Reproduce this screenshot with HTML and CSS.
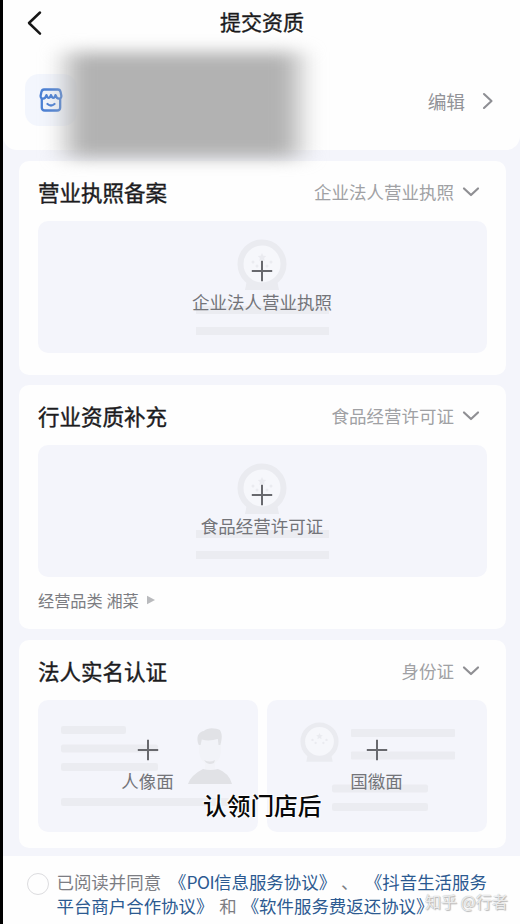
FILE: index.html
```html
<!DOCTYPE html>
<html lang="zh-CN">
<head>
<meta charset="utf-8">
<title>提交资质</title>
<link rel="stylesheet" href="styles.css">
</head>
<body>
<svg class="defs" width="0" height="0">
  <symbol id="down" viewBox="0 0 18 12"><path d="M2 2.500 9 9l7-6.500" fill="none" stroke="#8f8f93" stroke-width="2.200" stroke-linecap="round" stroke-linejoin="round"/></symbol>
  <symbol id="plus" viewBox="0 0 22 22"><path d="M11 .8v20.400M.8 11h20.400" stroke="#68696e" stroke-width="2" fill="none"/></symbol>
  <symbol id="emblem" viewBox="0 0 50 54">
    <path d="M10 41h30l2 10H8z" fill="#eaebf0"/>
    <circle cx="25" cy="25" r="21.500" fill="#f6f7fb" stroke="#eaebf0" stroke-width="6"/>
    <path d="m25 14 1.300 2.700 3 .4-2.200 2 .6 3-2.700-1.500-2.700 1.500.6-3-2.200-2 3-.4z" fill="#eaebf0"/>
    <g fill="#eaebf0"><circle cx="16" cy="23" r="1.500"/><circle cx="20" cy="27" r="1.500"/><circle cx="30" cy="27" r="1.500"/><circle cx="34" cy="23" r="1.500"/></g>
  </symbol>
</svg>
<div class="screen">
  <header class="top">
    <div class="nav">
      <svg class="back" width="18" height="28" viewBox="0 0 18 28"><path d="M14 3.500 3 14l11 10.700" fill="none" stroke="#161616" stroke-width="2.500" stroke-linecap="round" stroke-linejoin="round"/></svg>
      <h1>提交资质</h1>
    </div>
    <div class="store">
      <div class="avatar">
        <svg width="24" height="24" viewBox="0 0 24 24" fill="none" stroke="#4a7fd4" stroke-width="2.300" stroke-linejoin="round" stroke-linecap="round">
          <path d="M5 1.500h14q2 0 2.600 2.500l.8 4c0 3.500-4.400 4-5.900-.8-.9 3.500-3.400 3.500-4.500 0-1.100 3.500-3.600 3.500-4.500 0C6 12 1.600 11.500 1.600 8l.8-4Q3 1.500 5 1.500z"/>
          <path d="M2.800 11v8.500q0 3 3 3h12.400q3 0 3-3V11"/>
          <path d="M8.500 16q3.500 3 7 0"/>
        </svg>
      </div>
      <div class="edit"><span>编辑</span><svg width="12" height="18" viewBox="0 0 12 18"><path d="m2 2 7.500 7L2 16" fill="none" stroke="#8e8f94" stroke-width="2.100" stroke-linecap="round" stroke-linejoin="round"/></svg></div>
    </div>
    <svg class="mask" width="360" height="180" viewBox="0 0 360 180">
      <defs><filter id="soft" x="-30%" y="-40%" width="160%" height="180%" color-interpolation-filters="sRGB"><feGaussianBlur stdDeviation="13 8"/></filter></defs>
      <rect x="63" y="31" width="232" height="106" fill="#b2b2b2" filter="url(#soft)"/>
    </svg>
  </header>

  <main>
    <section class="card license">
      <div class="head"><h2>营业执照备案</h2><div class="select"><span>企业法人营业执照</span><svg width="18" height="12"><use href="#down"/></svg></div></div>
      <div class="panel">
        <div class="art doc"><svg width="50" height="54"><use href="#emblem"/></svg><i></i><i></i></div>
        <div class="upload"><svg width="22" height="22"><use href="#plus"/></svg><span>企业法人营业执照</span></div>
      </div>
    </section>

    <section class="card industry">
      <div class="head"><h2>行业资质补充</h2><div class="select"><span>食品经营许可证</span><svg width="18" height="12"><use href="#down"/></svg></div></div>
      <div class="panel">
        <div class="art doc"><svg width="50" height="54"><use href="#emblem"/></svg><i></i><i></i></div>
        <div class="upload"><svg width="22" height="22"><use href="#plus"/></svg><span>食品经营许可证</span></div>
      </div>
      <div class="category"><span>经营品类 湘菜</span><svg width="8" height="10" viewBox="0 0 8 10"><path d="M0 .7 8 5 0 9.300z" fill="#b9babd"/></svg></div>
    </section>

    <section class="card identity">
      <div class="head"><h2>法人实名认证</h2><div class="select"><span>身份证</span><svg width="18" height="12"><use href="#down"/></svg></div></div>
      <div class="pair">
        <div class="panel">
          <svg class="art" width="220" height="132" viewBox="0 0 220 132">
            <g fill="#ebecf1"><rect x="23" y="26" width="65" height="8" rx="2"/><rect x="23" y="44.500" width="97" height="8" rx="2"/><rect x="23" y="63" width="97" height="8" rx="2"/><rect x="23" y="98" width="170" height="8" rx="2"/></g>
            <path d="M161 40h22v12q-1 8-6 11v7h-10v-7q-5-3-6-11z" fill="#f2f3f8"/>
            <path d="M160.800 45c-3-7-1-13 5-14 4-4 12-3 16-1 3 4 2 10 .5 15h-1.800l-.7-6c-5 1.500-11 2-16 .5l-1.200 5.500zM166 60q6 3 11 0l-1 3q-5 2-8-.5zM150 84q3-9 15-15 7 2 15 0 11 4 14 15z" fill="#e1e2e6"/>
          </svg>
          <div class="upload"><svg width="22" height="22"><use href="#plus"/></svg><span>人像面</span></div>
        </div>
        <div class="panel">
          <svg class="art" width="220" height="132" viewBox="0 0 220 132">
            <use href="#emblem" x="33" y="22" width="39" height="42"/>
            <g fill="#ebecf1"><rect x="84" y="29" width="104" height="8" rx="1"/><rect x="84" y="51.500" width="104" height="8" rx="1"/><rect x="65" y="84.500" width="96" height="8" rx="2"/><rect x="65" y="103" width="96" height="8" rx="2"/></g>
          </svg>
          <div class="upload"><svg width="22" height="22"><use href="#plus"/></svg><span>国徽面</span></div>
        </div>
      </div>
    </section>
  </main>

  <footer>
    <div class="radio"></div>
    <p>已阅读并同意 <a class="first">《<span class="latin">POI</span>信息服务协议》</a> <span class="comma">、</span> <a class="next">《抖音生活服务</a><br><a>平台商户合作协议》</a> <span class="and">和</span> <a class="last">《软件服务费返还协议》</a></p>
  </footer>
  <div class="caption">认领门店后</div>
  <div class="watermark">知乎 @行者</div>
</div>
</body>
</html>
```
FILE: styles.css
```css
* { box-sizing: border-box; }
body { margin: 0; background: #000; font-family: "Noto Sans CJK SC", sans-serif; }
h1, h2, p { margin: 0; font-weight: 400; }
svg { display: block; flex: none; }
.defs { position: absolute; }

.screen {
  position: relative;
  width: 517px;
  height: 924px;
  margin-left: 3px;
  overflow: hidden;
  background: #f4f5fb;
  display: flex;
  flex-direction: column;
}

.top {
  position: relative;
  height: 150px;
  background: #fefefe;
  border-radius: 0 0 14px 14px;
}
.nav { height: 45px; display: grid; place-items: center; }
.nav > * { grid-area: 1 / 1; }
.back { justify-self: start; margin-left: 23px; }
h1 { font-size: 21px; line-height: 30px; color: #1a1a1c; margin: 0 0 3px 1px; -webkit-text-stroke: .35px #1a1a1c; }
.store {
  height: 54px;
  margin: 28px 26px 0 22px;
  display: flex;
  align-items: center;
  justify-content: space-between;
}
.avatar {
  width: 52px;
  height: 52px;
  border-radius: 14px;
  background: #f3f6fd;
  display: grid;
  place-items: center;
}
.edit { display: flex; align-items: center; gap: 17px; margin-top: 1px; color: #929398; font-size: 18.700px; line-height: 26px; }
.mask { position: absolute; left: 1px; top: 21px; z-index: 2; }

main { padding: 11px 14px 0 16px; display: grid; gap: 10.500px; }
.card { background: #fefefe; border-radius: 10px; padding: 0 19px; }
.license { height: 213.500px; }
.industry { height: 244px; }
.identity { height: 208.500px; }
.head { height: 60px; display: flex; align-items: center; justify-content: space-between; padding-top: 2px; }
h2 { font-size: 21.500px; line-height: 30px; color: #1c1c1e; -webkit-text-stroke: .4px #1c1c1e; }
.select { display: flex; align-items: center; gap: 8px; padding-right: 7px; color: #a0a1a4; font-size: 17.500px; line-height: 26px; }

.panel { position: relative; height: 132px; border-radius: 10px; background: #f4f5fb; }
.pair { display: grid; grid-template-columns: 220px 220px; justify-content: space-between; }
.art { position: absolute; left: 0; top: 0; }
.doc { width: 100%; display: flex; flex-direction: column; align-items: center; padding: 18px 1px 0 0; }
.doc i { width: 133px; height: 8px; background: #ebecf1; margin-top: 12.500px; }
.doc svg + i { margin-top: 13px; }
.upload {
  position: relative;
  padding: 39px 1px 0 0;
  display: flex;
  flex-direction: column;
  align-items: center;
  gap: 7px;
  font-size: 17.500px;
  line-height: 26px;
  color: #737479;
}
.category { display: flex; align-items: center; gap: 8px; margin-top: 11px; font-size: 16.200px; line-height: 24px; color: #7c7d82; }

footer { margin-top: 8px; flex: 1; background: #fefefe; display: flex; padding: 14px 0 0 24px; gap: 7.500px; }
.radio { width: 22px; height: 22px; margin-top: 3px; border: 1.500px solid #dcdcdf; border-radius: 50%; flex: none; }
footer p { font-size: 17.450px; line-height: 24px; color: #7c7d83; white-space: nowrap; }
footer a { color: #2c5a91; }
.first { margin-left: 4px; }
.latin { letter-spacing: -.5px; }
.comma { margin-left: 1px; }
.next { margin-left: 2.500px; }
.and { margin-left: 2px; }
.last { margin-left: 1px; }

.caption {
  position: absolute;
  left: 200px;
  top: 788px;
  font-size: 23.700px;
  line-height: 34px;
  font-weight: 500;
  color: #080808;
  text-shadow: 0 0 2px #fff, 0 0 2px #fff, 1px 1px 1px #fff, -1px -1px 1px #fff;
}
.watermark {
  position: absolute;
  left: 422px;
  top: 889px;
  font-size: 16px;
  line-height: 24px;
  white-space: nowrap;
  color: #fffc;
  text-shadow: 0 0 1px #999, 1px 1px 1px #bbb;
}
```
